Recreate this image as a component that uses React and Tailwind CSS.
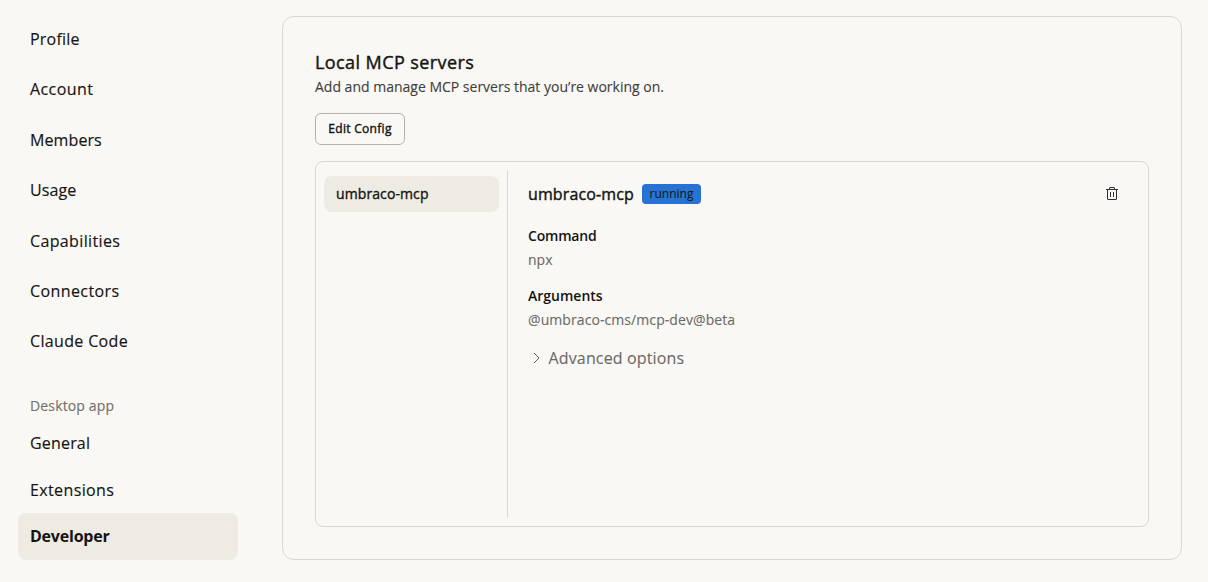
import React from "react";

const accountItems = [
  ["Profile", "tracking-[0.2px]"],
  ["Account", "tracking-[0.42px]"],
  ["Members", "tracking-[0.1px]"],
  ["Usage", "tracking-[0.1px]"],
  ["Capabilities", "tracking-[0.36px] pt-px"],
  ["Connectors", "tracking-[0.4px]"],
  ["Claude Code", "tracking-[0.34px]"],
];

const desktopItems = [
  ["General", "tracking-[0.18px]"],
  ["Extensions", "tracking-[0.38px]"],
];

function TrashIcon() {
  return (
    <svg className="mb-px" width="12" height="13" viewBox="0 0 12 13" fill="none" stroke="#30302e" strokeWidth="1">
      <path d="M0 2.5H12M1.5 2.5V12a0.5 0.5 0 0 0 0.5 0.5H10a0.5 0.5 0 0 0 0.5-0.5V2.5M3.5 2.5V1a0.5 0.5 0 0 1 0.5-0.5H8a0.5 0.5 0 0 1 0.5 0.5V2.5M4.5 5V10M7.5 5V10" />
    </svg>
  );
}

function Sidebar() {
  return (
    <nav className="ml-[18px] flex w-[220px] shrink-0 flex-col pt-[13.9px] text-[16px] leading-6 [-webkit-text-stroke:0.15px_currentColor]">
      <ul className="flex flex-col">
        {accountItems.map(([label, tracking]) => (
          <li key={label} className="flex h-[50.35px] items-center px-3">
            <span className={tracking}>{label}</span>
          </li>
        ))}
      </ul>
      <h3 className="mt-[29.5px] px-3 text-[14px] leading-5 tracking-[0.15px] text-[#73726c]">
        Desktop app
      </h3>
      <ul className="mt-[4px] flex flex-col">
        {desktopItems.map(([label, tracking]) => (
          <li key={label} className="flex h-[46.7px] items-center px-3">
            <span className={tracking}>{label}</span>
          </li>
        ))}
        <li className="flex h-[47px] items-center rounded-lg bg-[#eeebe2] px-3 pb-px font-bold tracking-[-0.22px] [-webkit-text-stroke:0px]">
          Developer
        </li>
      </ul>
    </nav>
  );
}

export default function App() {
  return (
    <div className="flex h-[582px] w-[1208px] overflow-hidden bg-[#f9f8f4] font-['Open_Sans','Noto_Sans',sans-serif] text-[#141413]">
      <Sidebar />
      <main className="mt-4 ml-11 flex h-[544px] w-[900px] flex-col rounded-xl border border-[#d8d7d2] px-8 pt-[31px]">
        <h1 className="text-[18px] leading-7 tracking-[0.42px] [-webkit-text-stroke:0.4px_currentColor]">
          Local MCP servers
        </h1>
        <p className="mt-px text-[14px] leading-5 text-[#3d3d3a] [-webkit-text-stroke:0.1px_currentColor]">
          Add and manage MCP servers that you’re working on.
        </p>
        <button className="mt-4 flex h-8 w-[90px] shrink-0 items-center justify-center rounded-[6px] border border-[#b3b2ad] text-[12px] tracking-[0.3px] [-webkit-text-stroke:0.4px_currentColor]">
          Edit Config
        </button>
        <section className="mt-4 flex h-[366px] rounded-lg border border-[#d8d7d2] p-2">
          <div className="w-[184px] border-r border-[#d8d7d2] pt-[6px]">
            <div className="flex h-9 w-[175px] items-center rounded-lg bg-[#eeebe2] px-3 pb-0.5 text-[14px] tracking-[0.1px] [-webkit-text-stroke:0.35px_currentColor]">
              umbraco-mcp
            </div>
          </div>
          <div className="flex flex-1 flex-col pt-3 pr-[22px] pl-5">
            <div className="flex h-6 items-center">
              <h2 className="w-[114px] text-[16px] leading-6 tracking-[0.12px] [-webkit-text-stroke:0.4px_currentColor]">
                umbraco-mcp
              </h2>
              <div className="flex h-5 w-[59px] items-center justify-center rounded-[4px] bg-[#2673d4] text-[12px]">running</div>
              <button className="ml-auto" aria-label="Delete server"><TrashIcon /></button>
            </div>
            <h3 className="mt-5 text-[14px] leading-5 font-semibold tracking-[-0.2px]">Command</h3>
            <p className="mt-1 text-[14px] leading-5 text-[#6b6a65] [-webkit-text-stroke:0.1px_currentColor]">npx</p>
            <h3 className="mt-4 text-[14px] leading-5 font-semibold">Arguments</h3>
            <p className="mt-1 text-[14px] leading-5 tracking-[0.08px] text-[#6b6a65] [-webkit-text-stroke:0.1px_currentColor]">
              @umbraco-cms/mcp-dev@beta
            </p>
            <div className="mt-4 flex h-6 items-center text-[16px] leading-6 tracking-[0.15px] text-[#6b6a65]">
              <svg className="mr-[7.5px] ml-[5px]" width="8" height="12" viewBox="0 0 8 12" fill="none" stroke="#5e5d59" strokeWidth="1">
                <path d="M1 1L6 6L1 11" />
              </svg>
              <span className="[-webkit-text-stroke:0.1px_currentColor]">Advanced options</span>
            </div>
          </div>
        </section>
      </main>
    </div>
  );
}
